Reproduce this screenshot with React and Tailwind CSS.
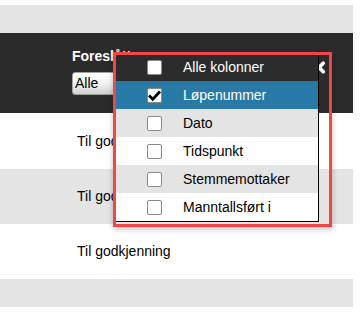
import React from "react";

function Box({ checked }) {
  return (
    <div className="w-[15px] h-[15px] bg-white border border-[#8a8a8a] rounded-[2px] relative shrink-0">
      {checked && (
        <svg viewBox="0 0 15 15" className="absolute left-[-1px] top-[-1px] w-[15px] h-[15px]">
          <path d="M2 7.5 L5.8 11.3 L13 3.5" fill="none" stroke="#000" strokeWidth="2.8" strokeLinecap="butt" strokeLinejoin="miter" />
        </svg>
      )}
    </div>
  );
}

const items = [
  { label: "Alle kolonner", bg: "bg-[#2c2c2c]", text: "text-white", checked: false },
  { label: "Løpenummer", bg: "bg-[#2879a6]", text: "text-white", checked: true },
  { label: "Dato", bg: "bg-[#e4e4e4]", text: "text-black", checked: false },
  { label: "Tidspunkt", bg: "bg-white", text: "text-black", checked: false },
  { label: "Stemmemottaker", bg: "bg-[#e4e4e4]", text: "text-black", checked: false },
  { label: "Manntallsført i", bg: "bg-white", text: "text-black", checked: false },
];

export default function App() {
  return (
    <div className="relative w-[363px] h-[326px] bg-white overflow-hidden text-[14px] font-['Liberation_Sans',Arial,sans-serif]">
      <div className="w-[353px]">
        <div className="h-[5px] bg-white" />
        <div className="h-[28px] bg-[#e4e4e4]" />
        <div className="h-[80px] bg-[#2b2b2b] pl-[72px] pt-[15px] relative">
          <div className="text-white font-bold leading-[16px]">Foreslått</div>
          <div className="mt-[8px] w-[90px] h-[23px] border border-[#a0a0a0] rounded-[3px] bg-gradient-to-b from-white via-[#f2f2f2] to-[#cfcfcf] text-black leading-[21px] pl-[2px]">
            Alle
          </div>
          <svg viewBox="0 0 16 16" className="absolute left-[311px] top-[27px] w-[16px] h-[15px]">
            <path d="M3.5 3.5 L12.5 12.5 M12.5 3.5 L3.5 12.5" stroke="#fff" strokeWidth="4" strokeLinecap="round" />
          </svg>
        </div>
        <div className="h-[56px] bg-white flex items-center pl-[77px]">Til godkjenning</div>
        <div className="h-[55px] bg-[#e4e4e4] flex items-center pl-[77px]">Til godkjenning</div>
        <div className="h-[55px] bg-white flex items-center pl-[77px]">Til godkjenning</div>
        <div className="h-[28px] bg-[#e4e4e4]" />
      </div>

      <div className="absolute left-[114px] top-[53px] w-[205px] border-r border-b border-black">
        {items.map((it) => (
          <div key={it.label} className={`h-[28px] flex items-center ${it.bg} ${it.text}`}>
            <div className="pl-[33px] pr-[21px]">
              <Box checked={it.checked} />
            </div>
            <span className="leading-[16px]">{it.label}</span>
          </div>
        ))}
      </div>

      <div className="absolute left-[113px] top-[52px] w-[219px] h-[175px] border-[3px] border-[#f2474a] shadow-[0_2px_6px_rgba(0,0,0,0.25)]" />
    </div>
  );
}
